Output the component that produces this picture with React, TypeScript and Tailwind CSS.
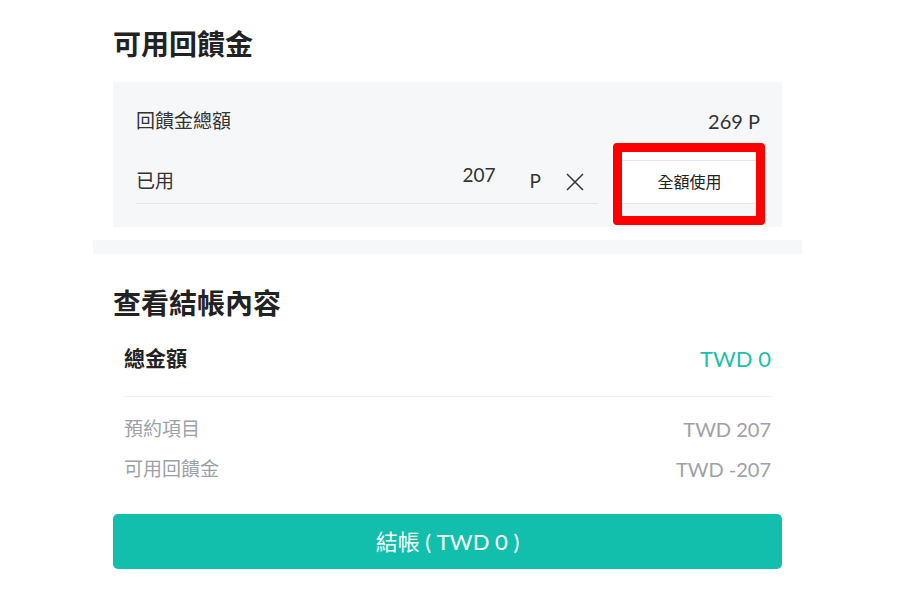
import React from "react";

const fontStack = "font-['Lato','Noto_Sans_CJK_TC','Noto_Sans',sans-serif]";

const CloseIcon = () => (
  <svg width="18" height="18" viewBox="0 0 18 18" className="text-[#333]">
    <path d="M1 1 L17 17 M17 1 L1 17" stroke="currentColor" strokeWidth="1.5" fill="none" />
  </svg>
);

const SummaryRow = ({ label, value }: { label: string; value: string }) => (
  <div className="flex h-[24px] items-center justify-between text-[#9da1a7]">
    <span className="text-[19px]">{label}</span>
    <span className="text-[20px]">{value}</span>
  </div>
);

export default function App() {
  return (
    <div className={`min-h-[600px] bg-white ${fontStack}`}>
      <div className="ml-[93px] w-[709px]">
        {/* 可用回饋金 */}
        <section className="px-5 pt-[26px] pb-[13px]">
          <h2 className="text-[28px] font-bold leading-[36px] text-[#222]">可用回饋金</h2>
          <div className="mt-5 h-[145px] bg-[#f6f7f9] pl-[23px] pr-[22px] pt-[27px]">
            <div className="flex h-[24px] items-center justify-between text-[#333]">
              <span className="text-[19px]">回饋金總額</span>
              <span className="text-[20px]">269 P</span>
            </div>
            <div className="mt-[17px] flex items-start">
              <div className="flex h-[54px] w-[462px] items-center border-b border-[#e4e6e9] pt-[10px] text-[#333]">
                <span className="text-[19px]">已用</span>
                <span className="mb-3 ml-auto text-[19px]">207</span>
                <span className="ml-[34px] text-[19px]">P</span>
                <span className="ml-[25px] mr-[14px] flex items-center">
                  <CloseIcon />
                </span>
              </div>
              <div className="relative ml-[24px] w-[135px]">
                <div className="h-[10px] bg-white" />
                <button className="flex h-[44px] w-full items-center justify-center border-y border-[#e4e6e9] bg-white text-[16px] text-[#222]">
                  全額使用
                </button>
                <div className="pointer-events-none absolute -left-[9px] -top-[7px] h-[82px] w-[152px] rounded-[4px] border-[9px] border-[#ff0000]" />
              </div>
            </div>
          </div>
        </section>

        <div className="h-[14px] bg-[#f6f7f9]" />

        {/* 查看結帳內容 */}
        <section className="px-5 pt-[31px]">
          <h2 className="text-[28px] font-bold leading-[36px] text-[#222]">查看結帳內容</h2>
          <div className="mt-[19px] px-[11px]">
            <div className="flex h-[36px] items-center justify-between">
              <span className="text-[21px] font-bold text-[#222]">總金額</span>
              <span className="text-[22px] text-[#1dbfa8]">TWD 0</span>
            </div>
            <div className="mt-5 border-b border-[#f0f1f2]" />
            <div className="mt-5 flex flex-col gap-4">
              <SummaryRow label="預約項目" value="TWD 207" />
              <SummaryRow label="可用回饋金" value="TWD -207" />
            </div>
          </div>
          <button className="mt-[33px] flex h-[55px] w-full items-center justify-center rounded-[5px] bg-[#12bfac] text-[22px] text-white">
            結帳 ( TWD 0 )
          </button>
        </section>
      </div>
    </div>
  );
}
